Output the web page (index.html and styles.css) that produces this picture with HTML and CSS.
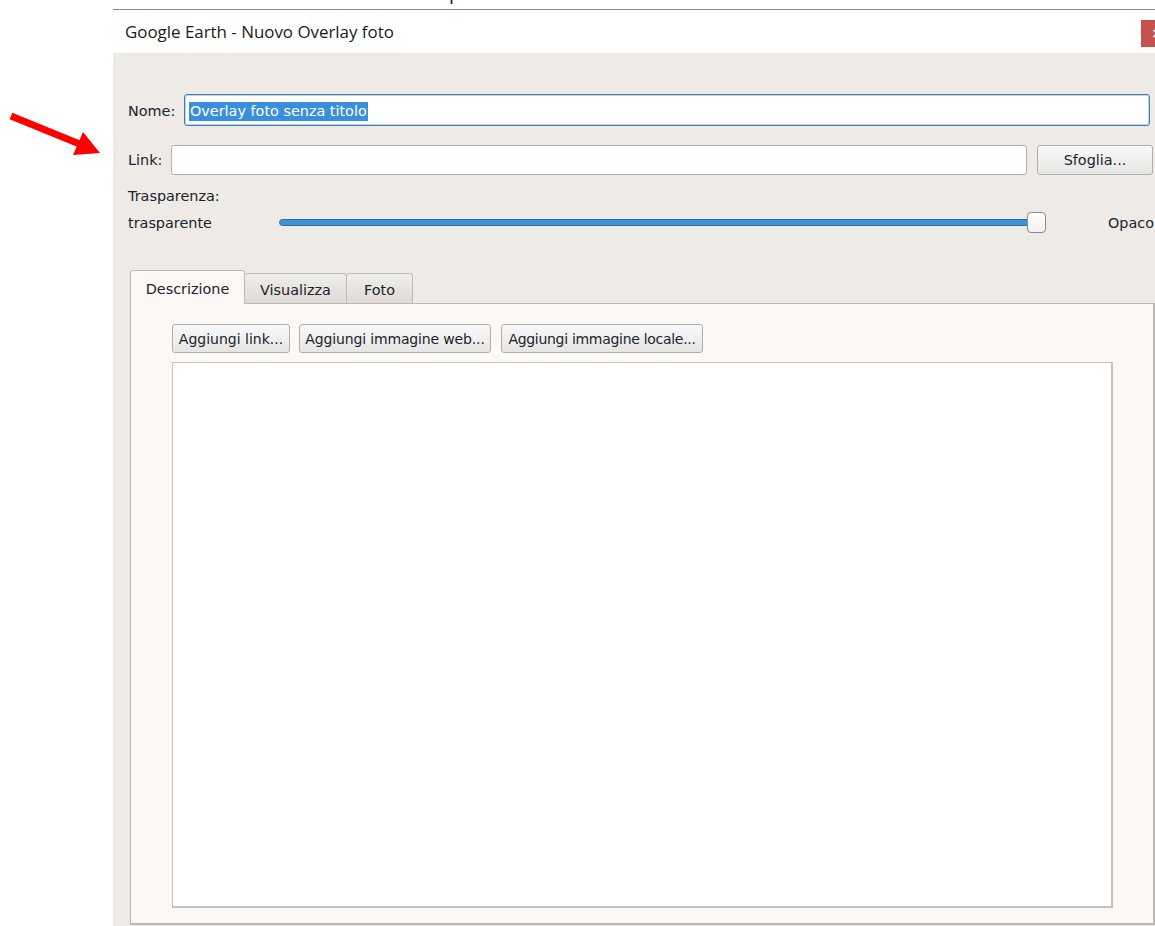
FILE: index.html
```html
<!DOCTYPE html>
<html lang="it">
<head>
<meta charset="utf-8">
<title>Google Earth - Nuovo Overlay foto</title>
<link rel="stylesheet" href="styles.css">
</head>
<body>
<div class="screen">
  <div class="gutter">
    <svg class="arrow" width="110" height="70" viewBox="0 100 110 70">
      <line x1="11" y1="116" x2="82" y2="145" stroke="#ff0000" stroke-width="7"/>
      <polygon points="100,153 83,132 73,155" fill="#ff0000"/>
    </svg>
  </div>
  <div class="window">
    <span class="above-glyph">p</span>
    <div class="titlebar">
      <span class="title">Google Earth - Nuovo Overlay foto</span>
      <span class="close">×</span>
    </div>
    <div class="dialog">
      <div class="row row-name">
        <label class="lbl">Nome:</label>
        <div class="field field-focus"><span class="sel">Overlay foto senza titolo</span></div>
      </div>
      <div class="row row-link">
        <label class="lbl">Link:</label>
        <div class="field field-link"></div>
        <button class="btn btn-browse">Sfoglia...</button>
      </div>
      <div class="lbl lbl-trasp">Trasparenza:</div>
      <div class="row row-slider">
        <span class="lbl lbl-min">trasparente</span>
        <div class="slider">
          <div class="groove"></div>
          <div class="handle"></div>
        </div>
        <span class="lbl lbl-max">Opaco</span>
      </div>
      <div class="tabs">
        <div class="tabbar">
          <div class="tab tab-active tab-desc">Descrizione</div>
          <div class="tab tab-view">Visualizza</div>
          <div class="tab tab-photo">Foto</div>
        </div>
        <div class="pane">
          <div class="toolbar">
            <button class="btn btn-link">Aggiungi link...</button>
            <button class="btn btn-web">Aggiungi immagine web...</button>
            <button class="btn btn-local">Aggiungi immagine locale...</button>
          </div>
          <div class="editor"></div>
        </div>
      </div>
    </div>
  </div>
</div>
</body>
</html>
```

FILE: styles.css
```css
html, body {
  margin: 0;
  padding: 0;
  background: #ffffff;
}

.screen {
  display: flex;
  width: 1155px;
  height: 926px;
  overflow: hidden;
  position: relative;
}

.gutter {
  width: 113px;
  flex: none;
  position: relative;
}

.arrow {
  position: absolute;
  left: 0;
  top: 100px;
}

.window {
  flex: 1;
  display: flex;
  flex-direction: column;
  margin-top: 9px;
  border-top: 1px solid #8a8a8a;
  position: relative;
  min-width: 0;
}

/* descender of a glyph from the window behind, peeking above the frame */
.above-glyph {
  position: absolute;
  left: 336px;
  top: -27px;
  font: 18px "DejaVu Sans", sans-serif;
  color: #222;
}

.titlebar {
  height: 43px;
  flex: none;
  display: flex;
  align-items: center;
  background: #ffffff;
  position: relative;
}

.title {
  padding-left: 12px;
  font-family: "Open Sans", sans-serif;
  font-size: 16.9px;
  color: #1a1a1a;
}

.close {
  position: absolute;
  left: 1028px;
  top: 10px;
  width: 46px;
  height: 27px;
  background: #c75050;
  color: #fff;
  font: 14px "DejaVu Sans", sans-serif;
  line-height: 27px;
  padding-left: 10px;
  box-sizing: border-box;
}

.dialog {
  flex: 1;
  display: flex;
  flex-direction: column;
  background: #eeebe7;
  padding: 41px 0 1px 15px;
  font-family: "DejaVu Sans", sans-serif;
  font-size: 14.4px;
  color: #20232c;
  min-height: 0;
}

.row {
  display: flex;
  align-items: center;
}

.lbl {
  white-space: nowrap;
}

.row-name {
  height: 32px;
  margin-right: 5px;
}

.row-name .lbl {
  width: 56px;
  flex: none;
  margin-top: 2px;
}

.field {
  flex: 1;
  height: 100%;
  background: #ffffff;
  border: 1px solid #aaa8a5;
  border-radius: 3px;
  box-sizing: border-box;
  display: flex;
  align-items: center;
}

.field-focus {
  border: 1px solid #3f7fb4;
  box-shadow: inset 0 0 0 1px #b9d4ea;
  padding-left: 4px;
}

.sel {
  background: #3a8fdc;
  color: #ffffff;
  line-height: 19px;
  padding: 0 1px;
  margin-top: 2px;
}

.row-link {
  height: 30px;
  margin-top: 19px;
  margin-right: 2px;
}

.row-link .lbl {
  width: 43px;
  flex: none;
}

.field-link {
  border-color: #b4b1ad;
}

.btn {
  font-family: "DejaVu Sans", sans-serif;
  font-size: 14.4px;
  color: #20232c;
  background: linear-gradient(#f9f9f9, #e6e5e4);
  border: 1px solid #b2afab;
  border-radius: 3px;
  padding: 0;
  height: 29px;
  cursor: default;
  white-space: nowrap;
  text-align: center;
  flex: none;
}

.btn-browse {
  width: 116px;
  height: 30px;
  margin-left: 10px;
}

.btn-link {
  width: 118px;
  font-size: 14px;
}

.btn-web {
  width: 192px;
  font-size: 14px;
  letter-spacing: -0.15px;
}

.btn-local {
  width: 202px;
  font-size: 14px;
  letter-spacing: -0.3px;
}

.lbl-trasp {
  margin-top: 13px;
  line-height: 17px;
}

.row-slider {
  height: 24px;
  margin-top: 6px;
}

.lbl-min {
  width: 151px;
  flex: none;
}

.slider {
  position: relative;
  width: 767px;
  height: 24px;
  flex: none;
}

.groove {
  position: absolute;
  left: 0;
  right: 8px;
  top: 8px;
  height: 5px;
  background: #3d95d6;
  border: 1px solid #2e6d9e;
  border-radius: 4px;
}

.handle {
  position: absolute;
  left: 748px;
  top: 1px;
  width: 17px;
  height: 19px;
  background: linear-gradient(#ffffff, #f1f1f1);
  border: 1px solid #8e8c89;
  border-radius: 4px;
}

.lbl-max {
  margin-left: 62px;
}

.tabs {
  flex: 1;
  display: flex;
  flex-direction: column;
  margin-top: 35px;
  padding-left: 2px;
  min-height: 0;
}

.tabbar {
  display: flex;
  align-items: flex-end;
  height: 33px;
  flex: none;
  position: relative;
  z-index: 1;
}

.tab {
  height: 30px;
  line-height: 32px;
  text-align: center;
  background: linear-gradient(#f0eeeb, #dedad6);
  border: 1px solid #bdb9b5;
  border-bottom: none;
  border-left: none;
  border-radius: 3px 3px 0 0;
  color: #20232c;
  box-sizing: border-box;
}

.tab-active {
  background: #fbf8f5;
  border-left: 1px solid #bdb9b5;
  margin-bottom: -1px;
  height: 34px;
  line-height: 36px;
}

.tab-desc {
  width: 115px;
}

.tab-view {
  width: 102px;
}

.tab-photo {
  width: 66px;
}

.pane {
  flex: 1;
  display: flex;
  flex-direction: column;
  background: #fbf8f5;
  border: 1px solid #bdb9b5;
  border-right-width: 2px;
  border-bottom-width: 2px;
  padding: 20px 40px 15px 41px;
  min-height: 0;
}

.toolbar {
  display: flex;
  gap: 9px;
  flex: none;
}

.toolbar .btn-web {
  margin-left: 0;
}

.toolbar .btn-local {
  margin-left: 1px;
}

.editor {
  flex: 1;
  margin-top: 9px;
  background: #ffffff;
  border: 1px solid #c6c3bf;
  border-right-width: 2px;
  border-bottom-width: 2px;
}
```
